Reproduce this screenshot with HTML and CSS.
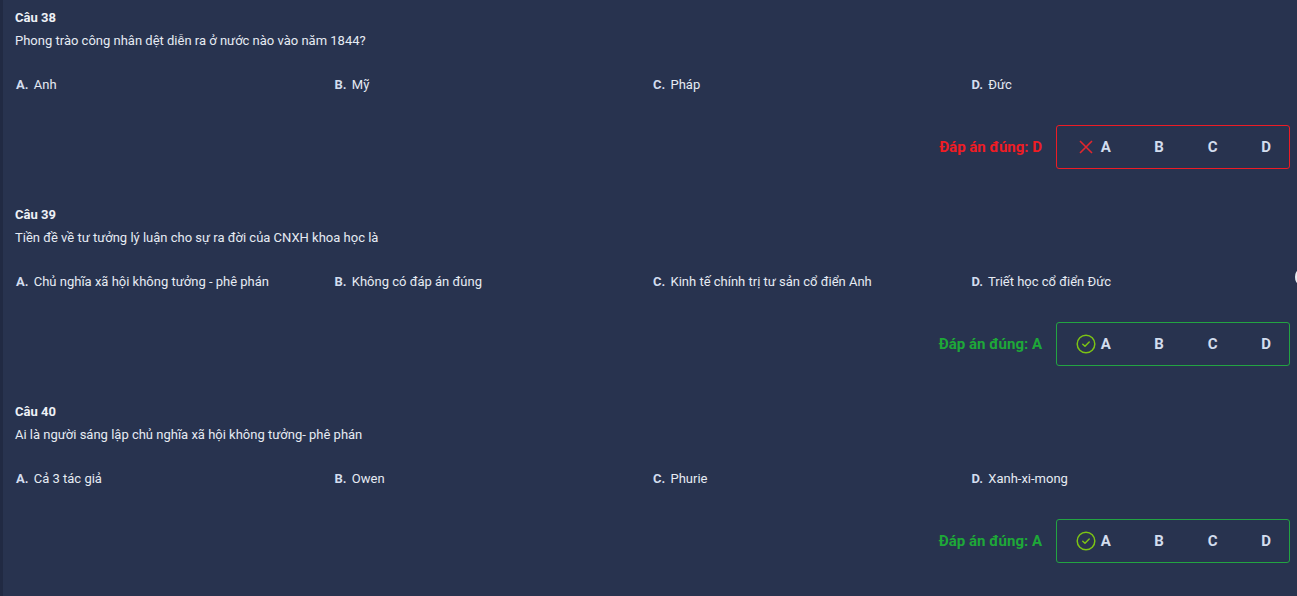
FILE: index.html
```html
<!DOCTYPE html>
<html lang="vi">
<head>
<meta charset="utf-8">
<link rel="stylesheet" href="styles.css">
</head>
<body>
<div class="page">
  <section class="question">
    <div class="q-title">Câu 38</div>
    <div class="q-text">Phong trào công nhân dệt diễn ra ở nước nào vào năm 1844?</div>
    <div class="options">
      <div class="opt"><b>A.</b> Anh</div>
      <div class="opt"><b>B.</b> Mỹ</div>
      <div class="opt"><b>C.</b> Pháp</div>
      <div class="opt"><b>D.</b> Đức</div>
    </div>
    <div class="answer-row wrong">
      <span class="answer-label">Đáp án đúng: D</span>
      <div class="answer-box">
        <div class="choice"><span class="ico"><svg width="16" height="16" viewBox="0 0 16 16"><path d="M2 2L14 14M14 2L2 14" stroke="#e3262d" stroke-width="1.6" fill="none"/></svg></span><span class="letter">A</span></div>
        <div class="choice"><span class="ico"></span><span class="letter">B</span></div>
        <div class="choice"><span class="ico"></span><span class="letter">C</span></div>
        <div class="choice"><span class="ico"></span><span class="letter">D</span></div>
      </div>
    </div>
  </section>
  <section class="question">
    <div class="q-title">Câu 39</div>
    <div class="q-text">Tiền đề về tư tưởng lý luận cho sự ra đời của CNXH khoa học là</div>
    <div class="options">
      <div class="opt"><b>A.</b> Chủ nghĩa xã hội không tưởng - phê phán</div>
      <div class="opt"><b>B.</b> Không có đáp án đúng</div>
      <div class="opt"><b>C.</b> Kinh tế chính trị tư sản cổ điển Anh</div>
      <div class="opt"><b>D.</b> Triết học cổ điển Đức</div>
    </div>
    <div class="answer-row right">
      <span class="answer-label">Đáp án đúng: A</span>
      <div class="answer-box">
        <div class="choice"><span class="ico"><svg width="20" height="20" viewBox="0 0 20 20"><circle cx="10" cy="10" r="8.8" stroke="#7cc414" stroke-width="1.5" fill="none"/><path d="M6.8 10.2L9 12.2L13.2 8" stroke="#7cc414" stroke-width="1.5" fill="none" stroke-linecap="round" stroke-linejoin="round"/></svg></span><span class="letter">A</span></div>
        <div class="choice"><span class="ico"></span><span class="letter">B</span></div>
        <div class="choice"><span class="ico"></span><span class="letter">C</span></div>
        <div class="choice"><span class="ico"></span><span class="letter">D</span></div>
      </div>
    </div>
  </section>
  <section class="question">
    <div class="q-title">Câu 40</div>
    <div class="q-text">Ai là người sáng lập chủ nghĩa xã hội không tưởng- phê phán</div>
    <div class="options">
      <div class="opt"><b>A.</b> Cả 3 tác giả</div>
      <div class="opt"><b>B.</b> Owen</div>
      <div class="opt"><b>C.</b> Phurie</div>
      <div class="opt"><b>D.</b> Xanh-xi-mong</div>
    </div>
    <div class="answer-row right">
      <span class="answer-label">Đáp án đúng: A</span>
      <div class="answer-box">
        <div class="choice"><span class="ico"><svg width="20" height="20" viewBox="0 0 20 20"><circle cx="10" cy="10" r="8.8" stroke="#7cc414" stroke-width="1.5" fill="none"/><path d="M6.8 10.2L9 12.2L13.2 8" stroke="#7cc414" stroke-width="1.5" fill="none" stroke-linecap="round" stroke-linejoin="round"/></svg></span><span class="letter">A</span></div>
        <div class="choice"><span class="ico"></span><span class="letter">B</span></div>
        <div class="choice"><span class="ico"></span><span class="letter">C</span></div>
        <div class="choice"><span class="ico"></span><span class="letter">D</span></div>
      </div>
    </div>
  </section>
  <span class="edge-dot"></span>
</div>
</body>
</html>
```
FILE: styles.css
```css
html, body {
  margin: 0;
  padding: 0;
  height: 100%;
  overflow: hidden;
}
body {
  background: #28334f;
  border-left: 3px solid #212a43;
  box-sizing: border-box;
  font-family: Roboto, "Liberation Sans", Arial, sans-serif;
  color: #e6ebf3;
}
.page {
  position: relative;
  padding: 9px 7px 0 12px;
}
.question {
  height: 197px;
  box-sizing: border-box;
}
.q-title {
  font-size: 13px;
  font-weight: 700;
  line-height: 18px;
  color: #eef1f6;
}
.q-text {
  font-size: 13px;
  line-height: 18px;
  margin-top: 5px;
}
.options {
  display: grid;
  grid-template-columns: repeat(4, 1fr);
  margin-top: 26px;
  font-size: 13px;
  line-height: 18px;
  padding-left: 1px;
}
.opt b {
  font-weight: 700;
  color: #d3ddee;
  margin-right: 2px;
}
.answer-row {
  display: flex;
  justify-content: flex-end;
  align-items: center;
  gap: 14px;
  margin-top: 31px;
}
.answer-label {
  font-size: 15px;
  font-weight: 700;
}
.wrong .answer-label { color: #f01c24; }
.right .answer-label { color: #1ea838; }
.answer-box {
  display: flex;
  width: 234px;
  height: 44px;
  box-sizing: border-box;
  padding: 0 8px 0 10px;
  border-radius: 3px;
  border: 1px solid #ee1c25;
}
.right .answer-box { border-color: #23a442; }
.choice {
  flex: 1;
  display: flex;
  align-items: center;
  justify-content: center;
  gap: 5px;
}
.ico {
  width: 20px;
  height: 20px;
  display: flex;
  align-items: center;
  justify-content: center;
}
.letter {
  font-size: 15px;
  font-weight: 700;
  color: #d3ddee;
  width: 11px;
}
.edge-dot {
  position: absolute;
  right: -6px;
  top: 270px;
  width: 8px;
  height: 14px;
  border-radius: 50%;
  background: #e8ecf2;
}
```
